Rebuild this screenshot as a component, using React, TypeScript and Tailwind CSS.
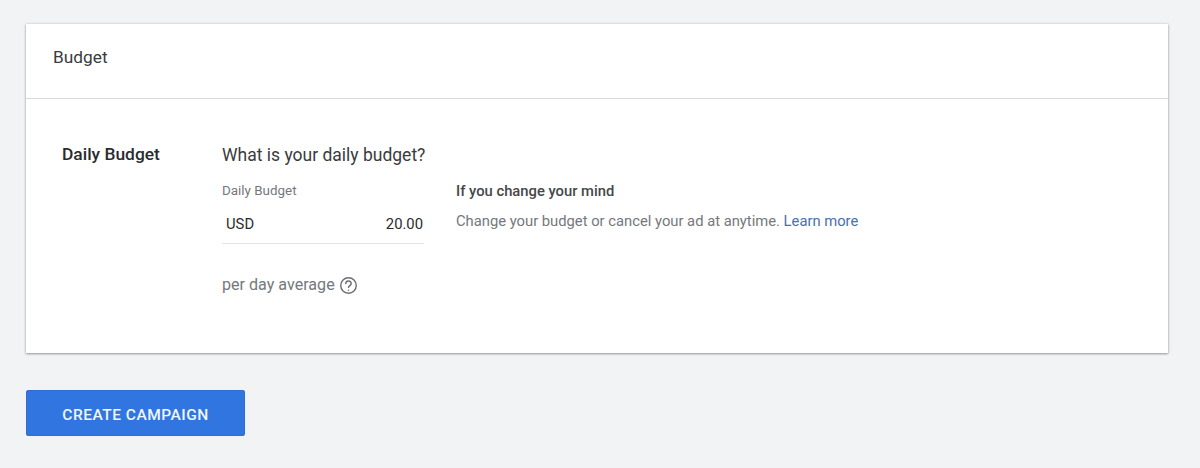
export default function App() {
  return (
    <div className="w-[1200px] h-[468px] overflow-hidden bg-[#f1f3f5] pt-6 pl-[26px] pr-8 font-['Roboto',sans-serif]">
      <div className="w-[1142px] h-[329px] bg-white shadow-[0_1px_2px_rgba(60,64,67,0.45),0_0_3px_rgba(60,64,67,0.18)]">
        <div className="h-[75px] border-b border-[#d9dadc] pl-[27px] pt-[21px]">
          <h2 className="text-[17.3px] leading-6 text-[#3a3b3e] font-normal">Budget</h2>
        </div>
        <div className="flex pl-9 pt-[44px]">
          <div className="w-[160px] text-[17.4px] leading-6 font-medium text-[#2a2b2e] -mt-px">Daily Budget</div>
          <div className="w-[202px]">
            <div className="text-[17.5px] leading-6 text-[#3a3b3e] whitespace-nowrap">What is your daily budget?</div>
            <div className="mt-[16px] text-[13.4px] leading-[16px] text-[#75787c]">Daily Budget</div>
            <div className="mt-[10px] h-[35px] border-b border-[#e3e4e6] flex items-start justify-between pl-1 pr-px pt-[5px] text-[14.8px] leading-5 text-[#2a2b2e]">
              <span>USD</span>
              <span>20.00</span>
            </div>
            <div className="mt-[30px] flex items-center gap-[4px] text-[16.1px] leading-5 text-[#75787c]">
              <span>per day average</span>
              <svg width="19" height="19" viewBox="0 0 24 24" fill="none" stroke="#6b6e72" strokeWidth="1.8" strokeLinecap="round" strokeLinejoin="round" className="mt-[2px]">
                <circle cx="12" cy="12" r="9.8" />
                <path d="M8.6 9.6a3.4 3.4 0 0 1 6.8.2c0 2.2-3.4 2.4-3.4 4.6" />
                <path d="M12 18h.01" />
              </svg>
            </div>
          </div>
          <div className="ml-[32px] pt-[38px]">
            <div className="text-[14.77px] leading-5 font-medium text-[#45474a] whitespace-nowrap">If you change your mind</div>
            <div className="mt-[10px] text-[14.77px] leading-5 text-[#75787c] whitespace-nowrap">
              Change your budget or cancel your ad at anytime. <a className="text-[#4a70ab]">Learn more</a>
            </div>
          </div>
        </div>
      </div>
      <button className="mt-[37px] w-[219px] h-[46px] rounded-[2px] bg-[#3176e0] border border-[#2f6fd0] text-[#f2f6fd] text-[15.5px] font-medium tracking-[0.5px] pt-[5px]">
        CREATE CAMPAIGN
      </button>
    </div>
  );
}
